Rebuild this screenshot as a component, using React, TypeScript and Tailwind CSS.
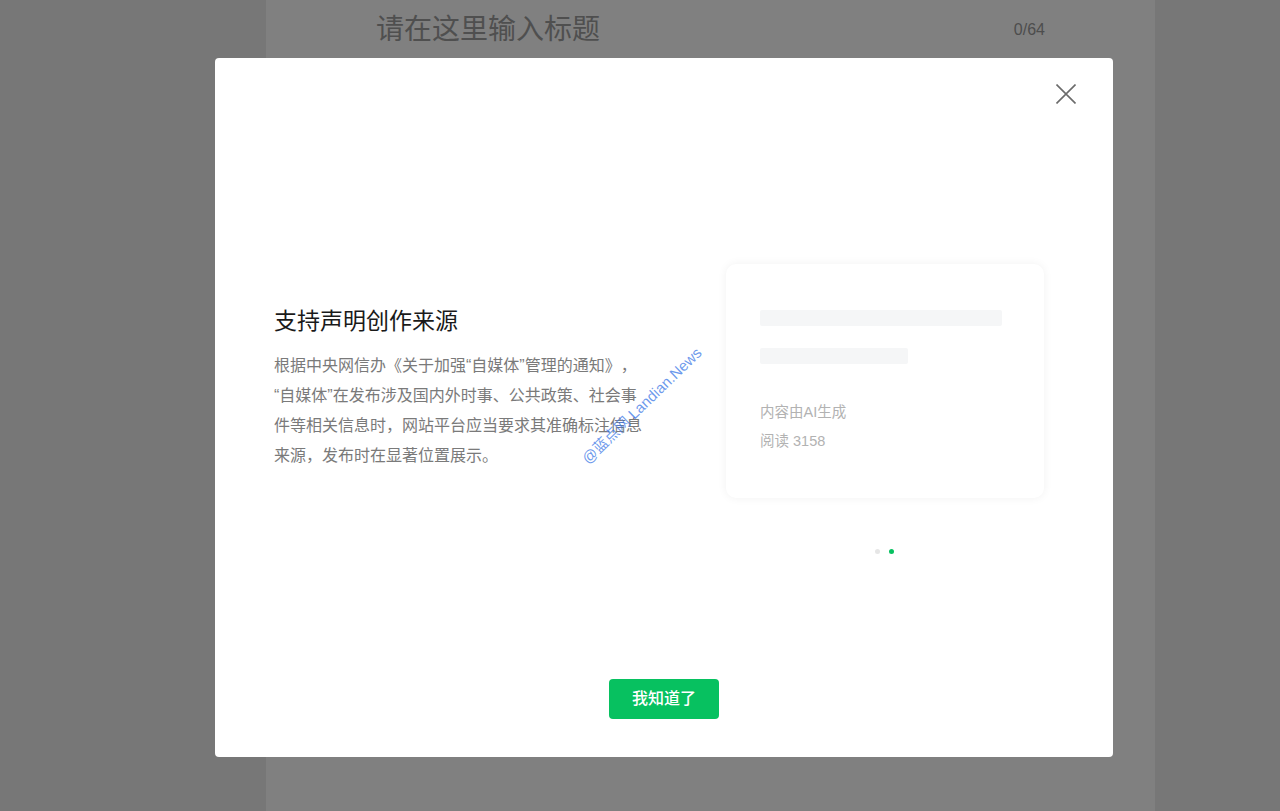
import React from "react";

const font = "font-['Liberation_Sans','Noto_Sans_CJK_SC',sans-serif]";

const paragraph = [
    "根据中央网信办《关于加强“自媒体”管理的通知》，",
    "“自媒体”在发布涉及国内外时事、公共政策、社会事",
    "件等相关信息时，网站平台应当要求其准确标注信息",
    "来源，发布时在显著位置展示。",
];

function CloseIcon() {
    return (
        <svg width="20" height="20" viewBox="0 0 20 20" fill="none">
            <path d="M0.5 0.5 L19.5 19.5 M19.5 0.5 L0.5 19.5" stroke="#6b6b6b" strokeWidth="1.6" />
        </svg>
    );
}

export default function App() {
    return (
        <div className={`min-h-screen h-[811px] overflow-hidden bg-[#777777] ${font} [text-spacing-trim:space-all]`}>
            {/* editor behind the overlay */}
            <div className="ml-[266px] w-[889px] h-[811px] bg-[#808080] px-[110px] pt-[9px]">
                <div className="flex items-center justify-between h-[42px]">
                    <span className="text-[28px] text-[#4f4f4f]">请在这里输入标题</span>
                    <span className="text-[16px] text-[#4d4d4d]">0/64</span>
                </div>
            </div>

            {/* dialog */}
            <div className="fixed left-[215px] top-[58px] w-[898px] h-[699px] bg-white rounded-[4px] flex flex-col">
                <button className="absolute right-[37px] top-[26px] w-5 h-5">
                    <CloseIcon />
                </button>

                <div className="flex items-start pt-[206px] pl-[59px]">
                    <div className="w-[380px] mt-[41px]">
                        <h2 className="text-[23px] leading-[32px] text-[#1a1a1a]">支持声明创作来源</h2>
                        <p className="mt-[14px] text-[16px] leading-[30px] text-[#7a7a7a] whitespace-nowrap">
                            {paragraph.map((line) => (
                                <React.Fragment key={line}>
                                    {line}
                                    <br />
                                </React.Fragment>
                            ))}
                        </p>
                    </div>

                    <div className="ml-[72px] flex flex-col items-center">
                        <div className="w-[318px] h-[234px] rounded-[10px] bg-white shadow-[0_0_10px_rgba(0,0,0,0.06)] pt-[46px] px-[34px]">
                            <div className="w-[242px] h-[16px] rounded-[2px] bg-[#f5f6f7]" />
                            <div className="mt-[22px] w-[148px] h-[16px] rounded-[2px] bg-[#f5f6f7]" />
                            <div className="mt-[34px] text-[14.5px] leading-[29px] text-[#b2b2b2]">
                                <div>内容由AI生成</div>
                                <div>阅读 3158</div>
                            </div>
                        </div>
                        <div className="mt-[51px] flex items-center gap-[9px] -translate-x-px">
                            <span className="w-[5px] h-[5px] rounded-full bg-[#e6e6e6]" />
                            <span className="w-[5px] h-[5px] rounded-full bg-[#07c160]" />
                        </div>
                    </div>
                </div>

                <div className="mt-auto pb-[38px] flex justify-center">
                    <button className="w-[110px] h-[40px] rounded-[4px] bg-[#07c160] text-white text-[16px] font-medium">
                        我知道了
                    </button>
                </div>
            </div>

            {/* site watermark */}
            <span className="fixed left-[642px] top-[406px] -translate-x-1/2 -translate-y-1/2 -rotate-[44deg] whitespace-nowrap text-[15px] text-[rgba(60,120,230,0.75)]">
                @蓝点网 Landian.News
            </span>
        </div>
    );
}
